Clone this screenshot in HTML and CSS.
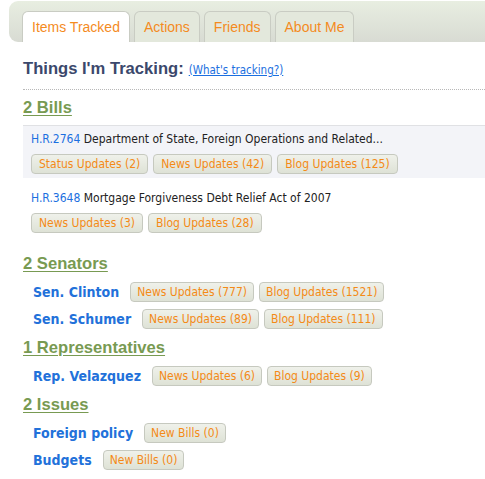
FILE: index.html
```html
<!DOCTYPE html>
<html>
<head>
<meta charset="utf-8">
<link rel="stylesheet" href="styles.css">
</head>
<body>
<div class="tabbar">
  <div class="tab active">Items Tracked</div>
  <div class="tab">Actions</div>
  <div class="tab">Friends</div>
  <div class="tab">About Me</div>
</div>
<div class="content">
  <div class="title"><h1>Things I'm Tracking:</h1> <a class="what" href="#">(What's tracking?)</a></div>
  <div class="sep"></div>

  <h2 class="section">2 Bills</h2>
  <div class="bill shaded">
    <div class="billtext"><a class="num" href="#">H.R.2764</a> Department of State, Foreign Operations and Related...</div>
    <div class="btns"><span class="btn">Status Updates (2)</span><span class="btn">News Updates (42)</span><span class="btn">Blog Updates (125)</span></div>
  </div>
  <div class="bill">
    <div class="billtext"><a class="num" href="#">H.R.3648</a> Mortgage Forgiveness Debt Relief Act of 2007</div>
    <div class="btns"><span class="btn">News Updates (3)</span><span class="btn">Blog Updates (28)</span></div>
  </div>

  <h2 class="section">2 Senators</h2>
  <div class="item"><span class="name">Sen. Clinton</span><span class="btn">News Updates (777)</span><span class="btn">Blog Updates (1521)</span></div>
  <div class="item"><span class="name">Sen. Schumer</span><span class="btn">News Updates (89)</span><span class="btn">Blog Updates (111)</span></div>

  <h2 class="section">1 Representatives</h2>
  <div class="item"><span class="name">Rep. Velazquez</span><span class="btn">News Updates (6)</span><span class="btn">Blog Updates (9)</span></div>

  <h2 class="section">2 Issues</h2>
  <div class="item"><span class="name">Foreign policy</span><span class="btn">New Bills (0)</span></div>
  <div class="item"><span class="name">Budgets</span><span class="btn">New Bills (0)</span></div>
</div>
</body>
</html>
```

FILE: styles.css
```css
* { box-sizing: border-box; }
html, body { margin: 0; padding: 0; background: #fff; }
body { font-family: "DejaVu Sans Condensed", "DejaVu Sans", sans-serif; }

.tabbar {
  margin: 1px 0 0 9px;
  height: 41px;
  border-radius: 9px 0 0 9px;
  background: linear-gradient(#e8eee1, #d8dbd3);
  display: flex;
  align-items: flex-end;
  gap: 4px;
  padding-left: 13px;
}
.tab {
  font-family: "Liberation Sans", Arial, sans-serif;
  font-size: 14px;
  color: #f48b1e;
  height: 31px;
  padding: 5px 9px 0;
  border: 1px solid #c9ccc3;
  border-bottom: none;
  border-radius: 6px 6px 0 0;
  background: #e3e8dc;
  line-height: 20px;
}
.tab.active { background: #fff; }

.content { padding: 17px 0 0 23px; }
.title { display: flex; align-items: baseline; gap: 5px; height: 21px; }
h1 {
  margin: 0;
  font-family: "Liberation Sans", Arial, sans-serif;
  font-size: 16.6px;
  font-weight: bold;
  color: #3b486c;
  line-height: 20px;
}
.what { font-size: 11.5px; color: #1b6fe0; }
.sep { border-top: 1px dotted #b8b8b8; margin-top: 9px; }

.section {
  margin: 0 0 4px;
  font-family: "Liberation Sans", Arial, sans-serif;
  font-size: 16.6px;
  font-weight: bold;
  color: #789a52;
  text-decoration: underline;
  text-underline-offset: 2px;
  line-height: 20px;
}
.sep + .section { margin-top: 8px; margin-bottom: 0; }

.bill { padding: 4px 8px 4px; }
.bill.shaded { background: #f3f4f8; border-top: 1px solid #e0e1e4; margin-top: 7px; }
.bill + .bill { padding-top: 11px; padding-bottom: 21px; }
.billtext { font-size: 12px; color: #222; line-height: 18px; }
.num { color: #1b6fe0; text-decoration: none; }
.btns { margin-top: 6px; display: flex; gap: 5px; }

.btn {
  display: inline-block;
  height: 20px;
  line-height: 18px;
  padding: 0 7px;
  font-size: 12px;
  color: #f48a17;
  border: 1px solid #c6c9bf;
  border-radius: 4px;
  background: linear-gradient(#eff1ea, #dee2d6);
}
.item .btn { padding: 0 6px; }

.item { display: flex; align-items: center; gap: 5px; height: 27px; padding-left: 10px; }
.name {
  font-size: 14px;
  font-weight: bold;
  color: #2271da;
  margin-right: 6px;
}
.item + .section { margin-top: 6px; }
```
